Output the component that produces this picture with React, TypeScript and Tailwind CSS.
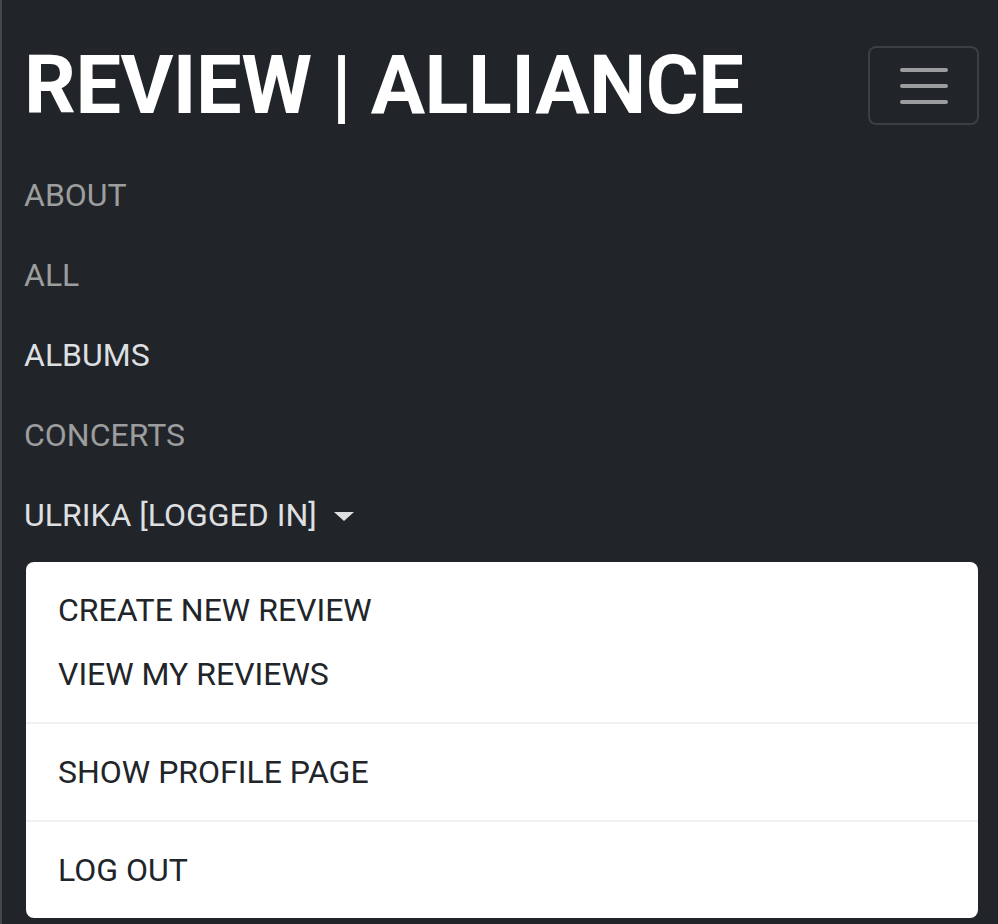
const navLinks = [
  { label: "ABOUT", active: false },
  { label: "ALL", active: false },
  { label: "ALBUMS", active: true },
  { label: "CONCERTS", active: false },
];

function TogglerIcon() {
  return (
    <svg width="60" height="60" viewBox="0 0 30 30" fill="none">
      <path
        d="M4 7h22M4 15h22M4 23h22"
        stroke="rgba(255,255,255,0.55)"
        strokeWidth="2"
        strokeLinecap="round"
      />
    </svg>
  );
}

export default function App() {
  return (
    <div
      className="w-full h-[924px] bg-[#212529] border-l-2 border-[#45494e] pl-[22px] pr-[19px] overflow-hidden"
      style={{ fontFamily: "Roboto, 'Liberation Sans', sans-serif" }}
    >
      {/* Brand + toggler */}
      <div className="flex items-start justify-between pt-[45px]">
        <a className="text-white font-bold text-[81px] leading-none tracking-[-0.5px]">
          REVIEW | ALLIANCE
        </a>
        <button className="mt-px w-[111px] h-[79px] flex items-center justify-center border-2 border-[#3c3f43] rounded-[8px]">
          <TogglerIcon />
        </button>
      </div>

      {/* Nav */}
      <ul className="mt-[29px] flex flex-col">
        {navLinks.map((link) => (
          <li key={link.label}>
            <a
              className={`block py-[16px] text-[32px] leading-[48px] ${
                link.active ? "text-[#dedfe0]" : "text-[#9b9d9e]"
              }`}
            >
              {link.label}
            </a>
          </li>
        ))}
        <li>
          <a className="flex items-center py-[16px] text-[32px] leading-[48px] text-[#dedfe0]">
            ULRIKA [LOGGED IN]
            <span className="ml-[17px] mt-[2px] w-0 h-0 border-l-[10px] border-r-[10px] border-t-[9px] border-l-transparent border-r-transparent border-t-[#dedfe0]" />
          </a>
        </li>
      </ul>

      {/* Dropdown */}
      <div className="mt-[7px] ml-[2px] mr-px bg-white rounded-[8px] py-[16px] text-[#212529]">
        <a className="block px-[32px] py-[8px] text-[32px] leading-[48px]">CREATE NEW REVIEW</a>
        <a className="block px-[32px] py-[8px] text-[32px] leading-[48px]">VIEW MY REVIEWS</a>
        <div className="my-[16px] h-[2px] bg-[#eef0f2]" />
        <a className="block px-[32px] py-[8px] text-[32px] leading-[48px]">SHOW PROFILE PAGE</a>
        <div className="my-[16px] h-[2px] bg-[#eef0f2]" />
        <a className="block px-[32px] py-[8px] text-[32px] leading-[48px]">LOG OUT</a>
      </div>
    </div>
  );
}
